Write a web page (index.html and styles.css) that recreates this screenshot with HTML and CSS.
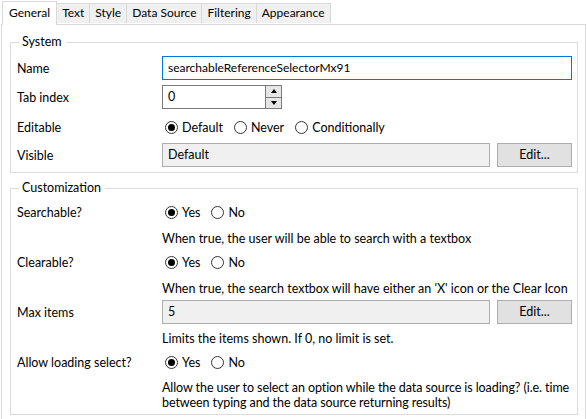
FILE: index.html
```html
<!DOCTYPE html>
<html>
<head>
<meta charset="utf-8">
<link rel="stylesheet" href="styles.css">
</head>
<body>
<div class="tabs">
  <div class="tab active">General</div>
  <div class="tab">Text</div>
  <div class="tab">Style</div>
  <div class="tab">Data Source</div>
  <div class="tab">Filtering</div>
  <div class="tab">Appearance</div>
</div>
<div class="panel">
  <fieldset class="group system">
    <legend>System</legend>
    <div class="label r1">Name</div>
    <div class="field r1"><div class="textbox focused">searchableReferenceSelectorMx91</div></div>

    <div class="label r2">Tab index</div>
    <div class="field r2">
      <div class="spinner">
        <div class="spin-text">0</div>
        <div class="spin-btns">
          <div class="spin-btn"><span class="arrow up"></span></div>
          <div class="spin-btn"><span class="arrow down"></span></div>
        </div>
      </div>
    </div>

    <div class="label r3">Editable</div>
    <div class="field r3 radios">
      <span class="radio checked"></span><span class="rtext">Default</span>
      <span class="radio"></span><span class="rtext">Never</span>
      <span class="radio"></span><span class="rtext">Conditionally</span>
    </div>

    <div class="label r4">Visible</div>
    <div class="field r4 editrow">
      <div class="readonly">Default</div>
      <div class="button">Edit...</div>
    </div>
  </fieldset>

  <fieldset class="group custom">
    <legend>Customization</legend>
    <div class="label c1">Searchable?</div>
    <div class="field c1 radios">
      <span class="radio checked"></span><span class="rtext">Yes</span>
      <span class="radio"></span><span class="rtext">No</span>
    </div>
    <div class="desc d1">When true, the user will be able to search with a textbox</div>

    <div class="label c1">Clearable?</div>
    <div class="field c1 radios">
      <span class="radio checked"></span><span class="rtext">Yes</span>
      <span class="radio"></span><span class="rtext">No</span>
    </div>
    <div class="desc d1">When true, the search textbox will have either an 'X' icon or the Clear Icon</div>

    <div class="label c1">Max items</div>
    <div class="field c1 editrow">
      <div class="readonly">5</div>
      <div class="button">Edit...</div>
    </div>
    <div class="desc d1">Limits the items shown. If 0, no limit is set.</div>

    <div class="label c1">Allow loading select?</div>
    <div class="field c1 radios">
      <span class="radio checked"></span><span class="rtext">Yes</span>
      <span class="radio"></span><span class="rtext">No</span>
    </div>
    <div class="desc d2">Allow the user to select an option while the data source is loading? (i.e. time between typing and the data source returning results)</div>
  </fieldset>
</div>
</body>
</html>
```

FILE: styles.css
```css
* { box-sizing: border-box; }
html, body { margin: 0; padding: 0; background: #ffffff; }
body {
  font-family: "Lato", "Noto Sans", sans-serif;
  font-size: 12px;
  color: #000;
  width: 587px;
  height: 419px;
  overflow: hidden;
  padding-left: 1px;
}

.tabs {
  display: flex;
  align-items: flex-end;
  height: 24px;
  padding-left: 1px;
  position: relative;
  z-index: 1;
}
.tab {
  height: 20px;
  line-height: 18px;
  padding: 0 5px;
  border: 1px solid #d9d9d9;
  border-bottom: none;
  border-left: none;
  background: #f0f0f0;
  margin-bottom: 1px;
}
.tab.active {
  height: 24px;
  line-height: 21px;
  background: #fff;
  border-left: 1px solid #d9d9d9;
  margin-bottom: -1px;
  padding: 0 6px 0 6px;
}

.panel {
  border: 1px solid #d9d9d9;
  border-bottom: none;
  width: 585px;
  height: 400px;
  padding: 9px 7px 0 8px;
}

.group {
  margin: 0;
  border: 1px solid #dcdcdc;
  display: grid;
  grid-template-columns: 145px 1fr;
  align-items: center;
  padding: 0 5px 0 6px;
}
.group legend {
  padding: 0 4px 0 3px;
  margin-left: 2px;
  line-height: 16px;
  font-size: 12.5px;
}
.system { padding-top: 4px; padding-bottom: 4px; }
.custom { margin-top: 7px; padding-top: 3px; padding-bottom: 4px; }

.label { grid-column: 1; display: flex; align-items: center; font-size: 12.5px; }
.field { grid-column: 2; display: flex; align-items: center; font-size: 12.5px; }
.desc { grid-column: 2; line-height: 15px; align-self: start; font-size: 12.5px; }

.r1 { height: 28px; }
.r2 { height: 30px; }
.r3 { height: 30px; }
.r4 { height: 26px; }

.c1 { height: 26px; }
.d1 { height: 24px; padding-top: 6px; }
.d2 { padding-top: 5px; margin-right: -5px; letter-spacing: -0.08px; }

.textbox {
  width: 100%;
  height: 24px;
  border: 1px solid #0078d7;
  padding: 0 5px;
  line-height: 21px;
  font-size: 12px;
}

.spinner {
  display: flex;
  width: 120px;
  height: 24px;
  border: 1px solid #7a7a7a;
}
.spin-text {
  flex: 1;
  padding: 0 5px;
  line-height: 21px;
}
.spin-btns {
  width: 16px;
  display: flex;
  flex-direction: column;
  border-left: 1px solid #7a7a7a;
}
.spin-btn {
  flex: 1;
  background: #e6e6e6;
  display: flex;
  align-items: center;
  justify-content: center;
}
.spin-btn + .spin-btn { border-top: 1px solid #7a7a7a; }
.arrow { width: 0; height: 0; border-left: 3.5px solid transparent; border-right: 3.5px solid transparent; }
.arrow.up { border-bottom: 4px solid #000; }
.arrow.down { border-top: 4px solid #000; }

.radio {
  width: 13px;
  height: 13px;
  border: 1px solid #333;
  border-radius: 50%;
  display: inline-flex;
  align-items: center;
  justify-content: center;
  margin-left: 3px;
  margin-right: 4px;
  flex: none;
}
.radio.checked::after {
  content: "";
  width: 7px;
  height: 7px;
  border-radius: 50%;
  background: #000;
}
.rtext { margin-right: 8px; }

.editrow { gap: 7px; }
.readonly {
  flex: 1;
  height: 24px;
  border: 1px solid #adadad;
  background: #f0f0f0;
  padding: 0 5px;
  line-height: 21px;
}
.button {
  width: 75px;
  height: 24px;
  border: 1px solid #adadad;
  background: #e1e1e1;
  text-align: center;
  line-height: 21px;
}
```
